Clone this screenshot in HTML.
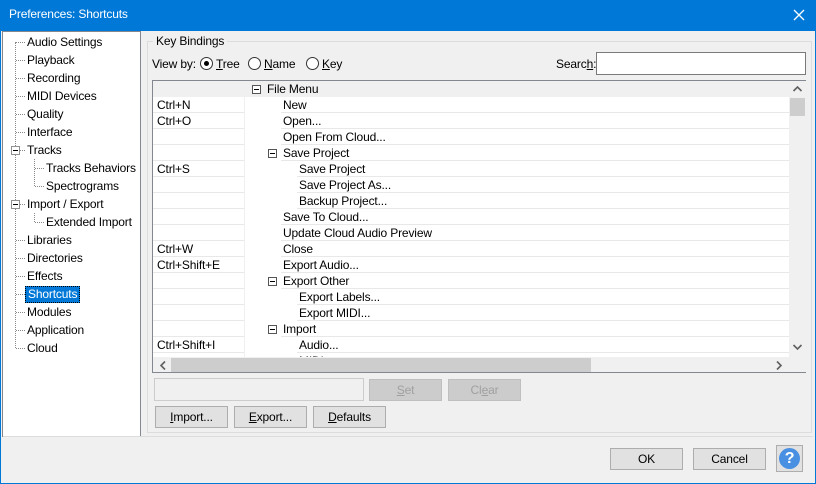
<!DOCTYPE html><html><head><meta charset="utf-8"><style>
*{margin:0;padding:0;box-sizing:border-box}
body{width:816px;height:484px;background:#f0f0f0;font-family:"Liberation Sans",sans-serif;font-size:12px;letter-spacing:-0.15px;color:#000;position:relative;overflow:hidden}
.a{position:absolute;white-space:nowrap}
.t{height:18px;line-height:18px}
.r{height:16px;line-height:16px}
.btn{position:absolute;background:#e1e1e1;border:1px solid #adadad;text-align:center;line-height:20px}
.dis{color:#a0a0a0;background:#cccccc;border-color:#bfbfbf}
.box{position:absolute;width:9px;height:9px;border:1px solid #555;background:#fff}
.box:after{content:"";position:absolute;left:1px;top:3px;width:5px;height:1px;background:#000}
.hd{position:absolute;height:0;border-top:1px dotted #888}
.ln{position:absolute;height:1px;background:#e8e8e8}
.rad{position:absolute;width:13px;height:13px;border:1px solid #333;border-radius:50%;background:#fff}
</style></head><body>
<div class="a" style="left:0;top:0;width:816px;height:31px;background:#0078d7"></div>
<div class="a" style="left:0;top:0;width:1px;height:484px;background:#0078d7"></div>
<div class="a" style="right:0;top:0;width:1px;height:484px;background:#0078d7"></div>
<div class="a" style="left:0;bottom:0;width:816px;height:1px;background:#0078d7"></div>
<div class="a" style="left:9px;top:7px;color:#fff;font-size:12px">Preferences: Shortcuts</div>
<svg class="a" style="left:793px;top:9px" width="12" height="12"><path d="M1 1L11 11M11 1L1 11" stroke="#fff" stroke-width="1.3"/></svg>

<div class="a" style="left:2px;top:31px;width:139px;height:406px;background:#fff;border:1px solid #828790"></div>
<div class="a" style="left:15px;top:42px;height:306px;border-left:1px dotted #888"></div>
<div class="a" style="left:34px;top:159px;height:27px;border-left:1px dotted #888"></div>
<div class="a" style="left:34px;top:213px;height:9px;border-left:1px dotted #888"></div>
<div class="a t" style="left:27px;top:33px">Audio Settings</div>
<div class="a t" style="left:27px;top:51px">Playback</div>
<div class="a t" style="left:27px;top:69px">Recording</div>
<div class="a t" style="left:27px;top:87px">MIDI Devices</div>
<div class="a t" style="left:27px;top:105px">Quality</div>
<div class="a t" style="left:27px;top:123px">Interface</div>
<div class="a t" style="left:27px;top:141px">Tracks</div>
<div class="a t" style="left:46px;top:159px">Tracks Behaviors</div>
<div class="a t" style="left:46px;top:177px">Spectrograms</div>
<div class="a t" style="left:27px;top:195px">Import / Export</div>
<div class="a t" style="left:46px;top:213px">Extended Import</div>
<div class="a t" style="left:27px;top:231px">Libraries</div>
<div class="a t" style="left:27px;top:249px">Directories</div>
<div class="a t" style="left:27px;top:267px">Effects</div>
<div class="a t" style="left:25px;top:286px;height:17px;line-height:15px;padding:0 2px;background:#0078d7;color:#fff;border:1px dotted #000">Shortcuts</div>
<div class="a t" style="left:27px;top:303px">Modules</div>
<div class="a t" style="left:27px;top:321px">Application</div>
<div class="a t" style="left:27px;top:339px">Cloud</div>
<div class="hd" style="left:16px;top:42px;width:9px"></div><div class="hd" style="left:16px;top:60px;width:9px"></div><div class="hd" style="left:16px;top:78px;width:9px"></div><div class="hd" style="left:16px;top:96px;width:9px"></div><div class="hd" style="left:16px;top:114px;width:9px"></div><div class="hd" style="left:16px;top:132px;width:9px"></div><div class="hd" style="left:20px;top:150px;width:5px"></div><div class="hd" style="left:35px;top:168px;width:9px"></div><div class="hd" style="left:35px;top:186px;width:9px"></div><div class="hd" style="left:20px;top:204px;width:5px"></div><div class="hd" style="left:35px;top:222px;width:9px"></div><div class="hd" style="left:16px;top:240px;width:9px"></div><div class="hd" style="left:16px;top:258px;width:9px"></div><div class="hd" style="left:16px;top:276px;width:9px"></div><div class="hd" style="left:16px;top:294px;width:9px"></div><div class="hd" style="left:16px;top:312px;width:9px"></div><div class="hd" style="left:16px;top:330px;width:9px"></div><div class="hd" style="left:16px;top:348px;width:9px"></div>
<div class="box" style="left:11px;top:146px;border-color:#919191"></div>
<div class="box" style="left:11px;top:200px;border-color:#919191"></div>

<div class="a" style="left:147px;top:41px;width:665px;height:392px;border:1px solid #dcdcdc"></div>
<div class="a" style="left:153px;top:33px;padding:0 3px;background:#f0f0f0;line-height:16px">Key Bindings</div>
<div class="a" style="left:152px;top:56px;line-height:16px">View by:</div>
<div class="rad" style="left:200px;top:57px"><div style="position:absolute;left:3px;top:3px;width:5px;height:5px;border-radius:50%;background:#000"></div></div>
<div class="a" style="left:216px;top:56px;line-height:16px"><u>T</u>ree</div>
<div class="rad" style="left:248px;top:57px"></div>
<div class="a" style="left:264px;top:56px;line-height:16px"><u>N</u>ame</div>
<div class="rad" style="left:306px;top:57px"></div>
<div class="a" style="left:322px;top:56px;line-height:16px"><u>K</u>ey</div>
<div class="a" style="left:556px;top:56px;line-height:16px">Searc<u>h</u>:</div>
<div class="a" style="left:596px;top:52px;width:210px;height:23px;background:#fff;border:1px solid #7a7a7a"></div>

<div class="a" style="left:152px;top:80px;width:654px;height:293px;background:#fff;border:1px solid #828790"></div>
<div class="a" style="left:153px;top:81px;width:636px;height:16px;background:#f0f0f0"></div>
<div class="a" style="left:244px;top:81px;width:1px;height:276px;background:#f0f0f0"></div>
<div class="ln" style="left:153px;top:112px;width:91px"></div><div class="ln" style="left:153px;top:128px;width:91px"></div><div class="ln" style="left:153px;top:144px;width:91px"></div><div class="ln" style="left:153px;top:160px;width:91px"></div><div class="ln" style="left:153px;top:176px;width:91px"></div><div class="ln" style="left:153px;top:192px;width:91px"></div><div class="ln" style="left:153px;top:208px;width:91px"></div><div class="ln" style="left:153px;top:224px;width:91px"></div><div class="ln" style="left:153px;top:240px;width:91px"></div><div class="ln" style="left:153px;top:256px;width:91px"></div><div class="ln" style="left:153px;top:272px;width:91px"></div><div class="ln" style="left:153px;top:288px;width:91px"></div><div class="ln" style="left:153px;top:304px;width:91px"></div><div class="ln" style="left:153px;top:320px;width:91px"></div><div class="ln" style="left:153px;top:336px;width:91px"></div><div class="ln" style="left:153px;top:352px;width:91px"></div>
<div class="ln" style="left:281px;top:112px;width:508px"></div><div class="ln" style="left:281px;top:128px;width:508px"></div><div class="ln" style="left:281px;top:144px;width:508px"></div><div class="ln" style="left:281px;top:160px;width:508px"></div><div class="ln" style="left:297px;top:176px;width:492px"></div><div class="ln" style="left:297px;top:192px;width:492px"></div><div class="ln" style="left:297px;top:208px;width:492px"></div><div class="ln" style="left:281px;top:224px;width:508px"></div><div class="ln" style="left:281px;top:240px;width:508px"></div><div class="ln" style="left:281px;top:256px;width:508px"></div><div class="ln" style="left:281px;top:272px;width:508px"></div><div class="ln" style="left:281px;top:288px;width:508px"></div><div class="ln" style="left:297px;top:304px;width:492px"></div><div class="ln" style="left:297px;top:320px;width:492px"></div><div class="ln" style="left:281px;top:336px;width:508px"></div><div class="ln" style="left:297px;top:352px;width:492px"></div>
<div class="a r" style="left:157px;top:97px">Ctrl+N</div>
<div class="a r" style="left:157px;top:113px">Ctrl+O</div>
<div class="a r" style="left:157px;top:161px">Ctrl+S</div>
<div class="a r" style="left:157px;top:241px">Ctrl+W</div>
<div class="a r" style="left:157px;top:257px">Ctrl+Shift+E</div>
<div class="a r" style="left:157px;top:337px">Ctrl+Shift+I</div>
<div class="box" style="left:252px;top:85px"></div>
<div class="box" style="left:268px;top:149px"></div>
<div class="box" style="left:268px;top:277px"></div>
<div class="box" style="left:268px;top:325px"></div>
<div class="a r" style="left:267px;top:81px">File Menu</div>
<div class="a r" style="left:283px;top:97px">New</div>
<div class="a r" style="left:283px;top:113px">Open...</div>
<div class="a r" style="left:283px;top:129px">Open From Cloud...</div>
<div class="a r" style="left:283px;top:145px">Save Project</div>
<div class="a r" style="left:299px;top:161px">Save Project</div>
<div class="a r" style="left:299px;top:177px">Save Project As...</div>
<div class="a r" style="left:299px;top:193px">Backup Project...</div>
<div class="a r" style="left:283px;top:209px">Save To Cloud...</div>
<div class="a r" style="left:283px;top:225px">Update Cloud Audio Preview</div>
<div class="a r" style="left:283px;top:241px">Close</div>
<div class="a r" style="left:283px;top:257px">Export Audio...</div>
<div class="a r" style="left:283px;top:273px">Export Other</div>
<div class="a r" style="left:299px;top:289px">Export Labels...</div>
<div class="a r" style="left:299px;top:305px">Export MIDI...</div>
<div class="a r" style="left:283px;top:321px">Import</div>
<div class="a r" style="left:299px;top:337px">Audio...</div>
<div class="a" style="left:299px;top:353px;height:4px;overflow:hidden;line-height:16px">MIDI...</div>
<div class="a" style="left:789px;top:81px;width:17px;height:276px;background:#f0f0f0"></div>
<div class="a" style="left:790px;top:98px;width:15px;height:18px;background:#cdcdcd"></div>
<svg class="a" style="left:792px;top:84px" width="11" height="10"><path d="M1.5 7L5.5 3L9.5 7" stroke="#606060" stroke-width="1.6" fill="none"/></svg>
<svg class="a" style="left:792px;top:342px" width="11" height="10"><path d="M1.5 3L5.5 7L9.5 3" stroke="#606060" stroke-width="1.6" fill="none"/></svg>
<div class="a" style="left:153px;top:357px;width:653px;height:15px;background:#f0f0f0"></div>
<div class="a" style="left:171px;top:358px;width:420px;height:14px;background:#cdcdcd"></div>
<svg class="a" style="left:158px;top:360px" width="10" height="11"><path d="M7 1.5L3 5.5L7 9.5" stroke="#606060" stroke-width="1.6" fill="none"/></svg>
<svg class="a" style="left:774px;top:360px" width="10" height="11"><path d="M3 1.5L7 5.5L3 9.5" stroke="#606060" stroke-width="1.6" fill="none"/></svg>

<div class="a" style="left:154px;top:378px;width:210px;height:23px;border:1px solid #cccccc;background:#f0f0f0"></div>
<div class="btn dis" style="left:369px;top:379px;width:73px;height:22px"><u>S</u>et</div>
<div class="btn dis" style="left:448px;top:379px;width:73px;height:22px">Cl<u>e</u>ar</div>
<div class="btn" style="left:155px;top:406px;width:73px;height:22px"><u>I</u>mport...</div>
<div class="btn" style="left:234px;top:406px;width:73px;height:22px"><u>E</u>xport...</div>
<div class="btn" style="left:313px;top:406px;width:73px;height:22px"><u>D</u>efaults</div>

<div class="a" style="left:3px;top:436px;width:810px;height:1px;background:#dcdcdc"></div>
<div class="btn" style="left:610px;top:448px;width:73px;height:22px">OK</div>
<div class="btn" style="left:693px;top:448px;width:73px;height:22px">Cancel</div>
<div class="btn" style="left:776px;top:445px;width:27px;height:27px;line-height:25px"><div style="position:absolute;left:2px;top:2px;width:21px;height:21px;border-radius:50%;background:#4a90e2;color:#fff;font-weight:bold;font-size:16px;line-height:21px">?</div></div>
</body></html>
